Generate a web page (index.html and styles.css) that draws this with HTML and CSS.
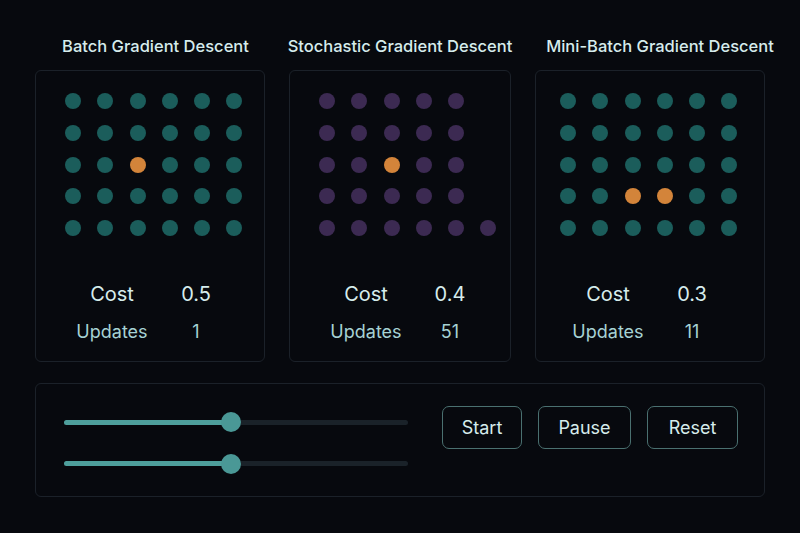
FILE: index.html
```html
<!DOCTYPE html>
<html>
<head>
<meta charset="utf-8">
<link rel="stylesheet" href="styles.css">
</head>
<body>
<div class="page">
  <div class="methods">
    <section class="method m1">
      <h2 class="title">Batch Gradient Descent</h2>
      <div class="panel">
        <div class="dots">
          <i class="d t"></i><i class="d t"></i><i class="d t"></i><i class="d t"></i><i class="d t"></i><i class="d t"></i>
          <i class="d t"></i><i class="d t"></i><i class="d t"></i><i class="d t"></i><i class="d t"></i><i class="d t"></i>
          <i class="d t"></i><i class="d t"></i><i class="d o"></i><i class="d t"></i><i class="d t"></i><i class="d t"></i>
          <i class="d t"></i><i class="d t"></i><i class="d t"></i><i class="d t"></i><i class="d t"></i><i class="d t"></i>
          <i class="d t"></i><i class="d t"></i><i class="d t"></i><i class="d t"></i><i class="d t"></i><i class="d t"></i>
        </div>
        <div class="stats">
          <span class="k cost">Cost</span><span class="v cost">0.5</span>
          <span class="k upd">Updates</span><span class="v upd">1</span>
        </div>
      </div>
    </section>
    <section class="method m2">
      <h2 class="title">Stochastic Gradient Descent</h2>
      <div class="panel">
        <div class="dots">
          <i class="d p"></i><i class="d p"></i><i class="d p"></i><i class="d p"></i><i class="d p"></i><i class="d e"></i>
          <i class="d p"></i><i class="d p"></i><i class="d p"></i><i class="d p"></i><i class="d p"></i><i class="d e"></i>
          <i class="d p"></i><i class="d p"></i><i class="d o"></i><i class="d p"></i><i class="d p"></i><i class="d e"></i>
          <i class="d p"></i><i class="d p"></i><i class="d p"></i><i class="d p"></i><i class="d p"></i><i class="d e"></i>
          <i class="d p"></i><i class="d p"></i><i class="d p"></i><i class="d p"></i><i class="d p"></i><i class="d p"></i>
        </div>
        <div class="stats">
          <span class="k cost">Cost</span><span class="v cost">0.4</span>
          <span class="k upd">Updates</span><span class="v upd">51</span>
        </div>
      </div>
    </section>
    <section class="method m3">
      <h2 class="title">Mini-Batch Gradient Descent</h2>
      <div class="panel">
        <div class="dots">
          <i class="d t"></i><i class="d t"></i><i class="d t"></i><i class="d t"></i><i class="d t"></i><i class="d t"></i>
          <i class="d t"></i><i class="d t"></i><i class="d t"></i><i class="d t"></i><i class="d t"></i><i class="d t"></i>
          <i class="d t"></i><i class="d t"></i><i class="d t"></i><i class="d t"></i><i class="d t"></i><i class="d t"></i>
          <i class="d t"></i><i class="d t"></i><i class="d o"></i><i class="d o"></i><i class="d t"></i><i class="d t"></i>
          <i class="d t"></i><i class="d t"></i><i class="d t"></i><i class="d t"></i><i class="d t"></i><i class="d t"></i>
        </div>
        <div class="stats">
          <span class="k cost">Cost</span><span class="v cost">0.3</span>
          <span class="k upd">Updates</span><span class="v upd">11</span>
        </div>
      </div>
    </section>
  </div>
  <div class="controls">
    <div class="sliders">
      <div class="slider"><div class="track"><div class="fill" style="width:48.5%"></div><div class="thumb" style="left:48.5%"></div></div></div>
      <div class="slider"><div class="track"><div class="fill" style="width:48.5%"></div><div class="thumb" style="left:48.5%"></div></div></div>
    </div>
    <div class="buttons">
      <button class="btn start">Start</button>
      <button class="btn pause">Pause</button>
      <button class="btn reset">Reset</button>
    </div>
  </div>
</div>
</body>
</html>
```

FILE: styles.css
```css
* { box-sizing: border-box; }
html, body { margin: 0; padding: 0; }
body {
  background: #07090e;
  width: 800px;
  height: 533px;
  overflow: hidden;
  font-family: Inter, "Liberation Sans", Arial, sans-serif;
  color: #d6ecec;
}
.page {
  padding: 36px 35px 0 35px;
}
.methods {
  display: flex;
  gap: 24px;
}
.method {
  display: flex;
  flex-direction: column;
}
.m1, .m3 { width: 230px; }
.m2 { width: 222px; }
.title {
  margin: 0 0 13px 0;
  font-size: 16.5px;
  line-height: 21px;
  font-weight: 500;
  text-align: center;
  white-space: nowrap;
  color: #d6ecec;
}
.m1 .title { margin-left: 11px; margin-right: 0; }
.m2 .title { margin-left: -4px; margin-right: -4px; }
.m3 .title { margin-left: 10px; margin-right: -10px; }
.panel {
  height: 292px;
  border: 1px solid #1b2129;
  border-radius: 6px;
  padding: 22px 0 0 29px;
}
.m3 .panel { padding-left: 24px; }
.dots {
  display: grid;
  grid-template-columns: repeat(6, 16px);
  grid-auto-rows: 16px;
  column-gap: 16.3px;
  row-gap: 15.8px;
}
.d {
  display: block;
  width: 16px;
  height: 16px;
  border-radius: 50%;
}
.d.t { background: #1b5d5b; }
.d.p { background: #3c2a52; }
.d.o { background: #d3843a; }
.d.e { background: transparent; }
.stats {
  display: grid;
  grid-template-columns: 84px 84px;
  grid-auto-rows: 38px;
  margin-top: 39px;
  margin-left: 5px;
  align-items: center;
}
.m3 .stats { margin-left: 6px; }
.stats span { text-align: center; line-height: 38px; }
.k.cost { font-size: 20px; color: #d6ecec; }
.v.cost { font-size: 20px; color: #d6ecec; }
.k.upd { font-size: 18px; color: #a6d2d4; }
.v.upd { font-size: 18px; color: #a6d2d4; }
.controls {
  margin-top: 21px;
  height: 114px;
  border: 1px solid #1b2129;
  border-radius: 6px;
  padding: 22px 26px 0 28px;
  display: flex;
  align-items: flex-start;
  gap: 34px;
}
.sliders {
  width: 345px;
  padding-top: 6px;
  display: flex;
  flex-direction: column;
  gap: 21.6px;
}
.slider {
  height: 20px;
  display: flex;
  align-items: center;
}
.track {
  position: relative;
  width: 100%;
  height: 5px;
  border-radius: 3px;
  background: #1a2229;
}
.fill {
  height: 100%;
  border-radius: 3px;
  background: #4e9f9c;
}
.thumb {
  position: absolute;
  top: 50%;
  width: 20px;
  height: 20px;
  margin: -10px 0 0 -10px;
  border-radius: 50%;
  background: #4a9896;
}
.buttons {
  display: flex;
  gap: 16px;
}
.btn {
  height: 43px;
  background: transparent;
  border: 1.5px solid #4a7070;
  border-radius: 7px;
  color: #d6ecec;
  font-family: Inter, "Liberation Sans", Arial, sans-serif;
  font-size: 18px;
  padding: 0;
}
.start { width: 80px; }
.pause { width: 93px; }
.reset { width: 91px; }
```
